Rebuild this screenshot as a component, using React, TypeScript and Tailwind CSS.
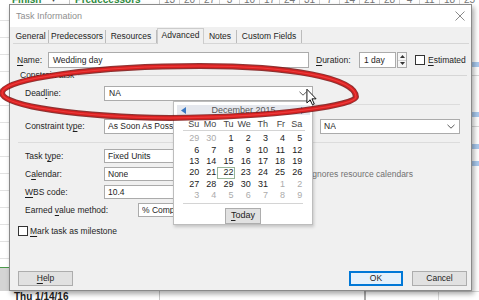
import React from "react";

const U = ({ children }: { children: React.ReactNode }) => (
  <span className="underline decoration-1 underline-offset-[1.5px]">{children}</span>
);

function Chevron() {
  return (
    <svg width="8" height="5" viewBox="0 0 8 5" className="shrink-0">
      <path d="M0.5 0.8L4 4.2L7.5 0.8" fill="none" stroke="#5a5a5a" strokeWidth="1" />
    </svg>
  );
}

function Combo({ text, className = "" }: { text: string; className?: string }) {
  return (
    <div className={`flex h-full shrink-0 items-center justify-between border border-[#ababab] bg-white pl-[3px] pr-[4px] ${className}`}>
      <span className="whitespace-nowrap overflow-hidden">{text}</span>
      <Chevron />
    </div>
  );
}

function Check() {
  return <div className="h-[10px] w-[10px] shrink-0 border border-[#333] bg-white" />;
}

function Spinner() {
  return (
    <div className="ml-px flex h-full w-[10px] shrink-0 flex-col border border-[#ababab] bg-[#f6f6f6]">
      <div className="flex flex-1 items-center justify-center border-b border-[#d4d4d4]">
        <svg width="5" height="3" viewBox="0 0 5 3"><path d="M0 3L2.5 0L5 3Z" fill="#333" /></svg>
      </div>
      <div className="flex flex-1 items-center justify-center">
        <svg width="5" height="3" viewBox="0 0 5 3"><path d="M0 0L2.5 3L5 0Z" fill="#333" /></svg>
      </div>
    </div>
  );
}

const weeks: [number, boolean][][] = [
  [[29, true], [30, true], [1, false], [2, false], [3, false], [4, false], [5, false]],
  [[6, false], [7, false], [8, false], [9, false], [10, false], [11, false], [12, false]],
  [[13, false], [14, false], [15, false], [16, false], [17, false], [18, false], [19, false]],
  [[20, false], [21, false], [22, false], [23, false], [24, false], [25, false], [26, false]],
  [[27, false], [28, false], [29, false], [30, false], [31, false], [1, true], [2, true]],
  [[3, true], [4, true], [5, true], [6, true], [7, true], [8, true], [9, true]],
];

function Calendar() {
  const days = ["Su", "Mo", "Tu", "We", "Th", "Fr", "Sa"];
  return (
    <div className="absolute left-[163px] top-[96px] z-20 flex h-[124px] w-[140px] flex-col border border-[#bdbdbd] bg-white text-[9px] leading-none shadow-[1px_2px_3px_rgba(0,0,0,0.18)]">
      <div className="ml-[3px] mr-[2px] mt-[3px] flex h-[10px] items-center justify-between bg-[#e5e8ee] px-[4px]">
        <svg width="5" height="7" viewBox="0 0 5 7"><path d="M5 0L0 3.5L5 7Z" fill="#3a78c4" /></svg>
        <span className="text-[#555]">December 2015</span>
        <svg width="5" height="7" viewBox="0 0 5 7"><path d="M0 0L5 3.5L0 7Z" fill="#3a78c4" /></svg>
      </div>
      <div className="ml-[9px] mt-[4px] grid h-[10px] grid-cols-[repeat(7,17.2px)]">
        {days.map((d) => (
          <div key={d} className="flex items-center justify-end pr-[1px] text-[#444]">{d}</div>
        ))}
      </div>
      <div className="ml-[9px] mt-px h-px w-[122px] bg-[#d4d4d4]" />
      <div className="ml-[9px] mt-[2px] grid grid-cols-[repeat(7,17.2px)]">
        {weeks.flat().map(([n, g], i) => (
          <div
            key={i}
            className={`flex h-[11.4px] items-center justify-end ${i === 23 ? "border border-[#97b497] pr-0" : "pr-[1px]"} ${g ? "text-[#ababab]" : "text-[#222]"}`}
          >
            {n}
          </div>
        ))}
      </div>
      <div className="ml-[9px] mt-[1.3px] h-px w-[120px] bg-[#d4d4d4]" />
      <div className="ml-[51px] mt-[4px] flex h-[16px] w-[36px] items-center justify-center border border-[#adadad] bg-[#e1e1e1] text-[#222]">
        <span><U>T</U>oday</span>
      </div>
    </div>
  );
}

function Dialog() {
  const tabs: [string, string, boolean][] = [
    ["General", "w-[36px]", false],
    ["Predecessors", "w-[57px]", false],
    ["Resources", "w-[51px]", false],
    ["Advanced", "w-[47px]", true],
    ["Notes", "w-[33px]", false],
    ["Custom Fields", "w-[65px]", false],
  ];
  return (
    <div className="absolute left-[9px] top-[4px] z-10 flex h-[287px] w-[463px] flex-col border border-[#8a8a8a] bg-[#f0f0f0] text-[8.5px] leading-none text-[#1e1e1e] shadow-[2px_3px_5px_rgba(0,0,0,0.35)]">
      {/* title bar */}
      <div className="flex h-[22px] shrink-0 items-center justify-between bg-white pl-[6px] pr-[6px]">
        <span className="text-[9px] text-[#8f8f8f]">Task Information</span>
        <svg width="10" height="10" viewBox="0 0 10 10">
          <path d="M0.5 0.5L9.5 9.5M9.5 0.5L0.5 9.5" stroke="#8a8a8a" strokeWidth="1" />
        </svg>
      </div>
      {/* tabs */}
      <div className="ml-[3px] flex h-[16px] shrink-0 items-end">
        {tabs.map(([t, w, sel]) =>
          sel ? (
            <div key={t} className={`relative z-10 -mb-px flex h-[16px] items-center justify-center border border-b-0 border-[#cccccc] bg-[#f0f0f0] pb-[2px] ${w}`}>
              {t}
            </div>
          ) : (
            <div key={t} className={`flex h-[13px] items-center justify-center border-r border-[#bcbcbc] ${w}`}>
              {t}
            </div>
          )
        )}
      </div>
      {/* panel */}
      <div className="ml-[3px] flex h-[220px] w-[456px] shrink-0 flex-col border-t border-[#d6d6d6]">
        {/* Name row */}
        <div className="mt-[8px] flex h-[16px] items-center pl-[4px]">
          <div className="w-[31px] shrink-0"><U>N</U>ame:</div>
          <div className="flex h-full w-[261px] shrink-0 items-center border border-[#ababab] bg-white pl-[4px]">Wedding day</div>
          <div className="ml-[7px] w-[43px] shrink-0"><U>D</U>uration:</div>
          <div className="flex h-full w-[37px] shrink-0 items-center border border-[#ababab] bg-white pl-[4px]">1 day</div>
          <Spinner />
          <div className="ml-[8px]"><Check /></div>
          <div className="ml-[3px]"><U>E</U>stimated</div>
        </div>
        {/* Constrain task */}
        <div className="mt-px flex h-[12px] items-center pl-[7px] pr-[2px]">
          <span className="whitespace-nowrap">Constrain task</span>
          <div className="ml-[4px] h-px flex-1 bg-[#d6d6d6]" />
        </div>
        {/* Deadline */}
        <div className="mt-[5px] flex h-[15px] items-center pl-[12px]">
          <div className="w-[79px] shrink-0">Dead<U>l</U>ine:</div>
          <div className="flex h-full w-[209px] shrink-0 items-center justify-between border border-[#ababab] bg-white pl-[4px] pr-[5px]">
            <span>NA</span>
            <Chevron />
          </div>
        </div>
        <div className="ml-[300px] mt-[3px] h-px w-[147px] bg-[#dcdcdc]" />
        {/* Constraint type */}
        <div className="mt-[14px] flex h-[15px] items-center pl-[12px]">
          <div className="w-[79px] shrink-0">Constraint ty<U>p</U>e:</div>
          <Combo text="As Soon As Possible" className="w-[136px]" />
          <div className="ml-[4px] w-[76px] shrink-0 whitespace-nowrap">Constraint <U>d</U>ate:</div>
          <Combo text="NA" className="w-[140px]" />
        </div>
        <div className="ml-[5px] mt-[8px] h-px w-[442px] bg-[#dcdcdc]" />
        {/* Task type */}
        <div className="mt-[6px] flex h-[14px] items-center pl-[12px]">
          <div className="w-[79px] shrink-0">Task t<U>y</U>pe:</div>
          <Combo text="Fixed Units" className="w-[136px]" />
          <div className="ml-[13px]"><Check /></div>
          <div className="ml-[3px] whitespace-nowrap">Effort dri<U>v</U>en</div>
        </div>
        {/* Calendar */}
        <div className="mt-[4px] flex h-[14px] items-center pl-[12px]">
          <div className="w-[79px] shrink-0">C<U>a</U>lendar:</div>
          <Combo text="None" className="w-[136px]" />
          <div className="ml-[13px]"><Check /></div>
          <div className="ml-[3px] whitespace-nowrap text-[#707070]">Scheduling ignores resource calendars</div>
        </div>
        {/* WBS */}
        <div className="mt-[4px] flex h-[14px] items-center pl-[12px]">
          <div className="w-[79px] shrink-0"><U>W</U>BS code:</div>
          <div className="flex h-full w-[136px] shrink-0 items-center border border-[#ababab] bg-white pl-[3px]">10.4</div>
        </div>
        {/* EVM */}
        <div className="mt-[4px] flex h-[14px] items-center pl-[12px]">
          <div className="w-[113px] shrink-0">Earned <U>v</U>alue method:</div>
          <Combo text="% Complete" className="w-[102px]" />
        </div>
        {/* milestone */}
        <div className="mt-[9px] flex h-[10px] items-center pl-[5px]">
          <Check />
          <div className="ml-[2px]"><U>M</U>ark task as milestone</div>
        </div>
      </div>
      {/* footer */}
      <div className="flex pl-[8px] pr-[4px] pt-[8px]">
        <div className="flex h-[15px] w-[55px] items-center justify-center border border-[#adadad] bg-[#e1e1e1]"><span><U>H</U>elp</span></div>
        <div className="flex-1" />
        <div className="flex h-[15px] w-[54px] items-center justify-center border-2 border-[#0078d7] bg-[#e5f1fb]">OK</div>
        <div className="ml-[9px] flex h-[15px] w-[55px] items-center justify-center border border-[#adadad] bg-[#e1e1e1]">Cancel</div>
      </div>
      <Calendar />
    </div>
  );
}

function Background() {
  const nums = ["13", "20", "27", "3", "10", "17", "24", "31", "7", "14", "21", "28", "4", "11", "18", "25"];
  return (
    <div className="flex h-[300px] w-[479px] flex-col bg-white">
      <div className="flex h-[4px] shrink-0 overflow-hidden bg-white text-[10px] font-bold leading-[10px]">
        <div className="-mt-[5px] flex w-[70px] shrink-0 border-r border-[#c8c8c8]">
          <span className="ml-[12px] text-[#2e8b3e]">Finish</span>
          <span className="ml-[8px] text-[8px] text-[#444]">▼</span>
        </div>
        <div className="-mt-[5px] flex w-[90px] shrink-0 border-r border-[#c8c8c8]">
          <span className="ml-[5px] text-[#2e8b3e]">Predecessors</span>
        </div>
        {nums.map((n, i) => (
          <div key={i} className="-mt-[5px] flex w-[20px] shrink-0 justify-center border-r border-[#d4d4d4] font-normal text-[#777]">{n}</div>
        ))}
      </div>
      <div className="flex h-[287px] shrink-0">
        <div className="flex w-[9px] flex-col">
          {Array.from({ length: 15 }).map((_, i) => (
            <div key={i} className="h-[17px] shrink-0 border-b border-[#e2e2e2]" />
          ))}
          <div className="h-[9px] shrink-0 border-b border-[#4a9a4a]" />
          <div className="flex-1 bg-[#d4d4d4]" />
        </div>
        <div className="flex-1" />
        <div className="flex w-[7px] flex-col">
          <div className="mt-[58px] h-[5px] bg-[#a9c9ee]" />
          <div className="mt-[8px] h-px bg-[#d8d8d8]" />
          <div className="mt-[36px] h-[5px] bg-[#a9c9ee]" />
          <div className="mt-[9px] h-px bg-[#d8d8d8]" />
          <div className="mt-[17px] h-[5px] bg-[#a9c9ee]" />
          <div className="mt-[12px] h-[5px] bg-[#a9c9ee]" />
        </div>
      </div>
      <div className="flex h-[9px] shrink-0 text-[10px] font-bold leading-[10px] text-[#222]">
        <div className="w-[160px] shrink-0 border-r border-[#c8c8c8] pl-[14px] pt-px">Thu 1/14/16</div>
        <div className="w-[206px] shrink-0 border-r-2 border-[#a8a8a8]" />
        <div className="w-[73px] shrink-0 border-r border-t border-[#d8d8d8]" />
        <div className="flex-1 border-t border-[#d8d8d8]" />
      </div>
    </div>
  );
}

const RING = "M2 93 C2 78 100 66 200 66 C290 66 356 78 356 97 C356 105 280 117 170 118 C80 117 2 106 2 93 Z";

export default function App() {
  return (
    <div className="relative h-[300px] w-[479px] overflow-hidden font-['Liberation_Sans',Arial,sans-serif]">
      <Background />
      <Dialog />
      <svg className="pointer-events-none absolute left-0 top-0 z-30" width="479" height="300" viewBox="0 0 479 300">
        <path d={RING} fill="none" stroke="#7e1010" strokeWidth="6" opacity="0.85" />
        <path d={RING} fill="none" stroke="#dc1f1f" strokeWidth="3.6" />
        <path d={RING} fill="none" stroke="#f04a4a" strokeWidth="1.2" opacity="0.7" />
      </svg>
      <svg className="pointer-events-none absolute left-[306px] top-[88px] z-40" width="11" height="18" viewBox="0 0 12 19">
        <path d="M1 1L1 16L4.5 12.5L7 18L9 17L6.5 11.5L11 11.5Z" fill="#fff" stroke="#000" strokeWidth="1" strokeLinejoin="round" />
      </svg>
    </div>
  );
}
